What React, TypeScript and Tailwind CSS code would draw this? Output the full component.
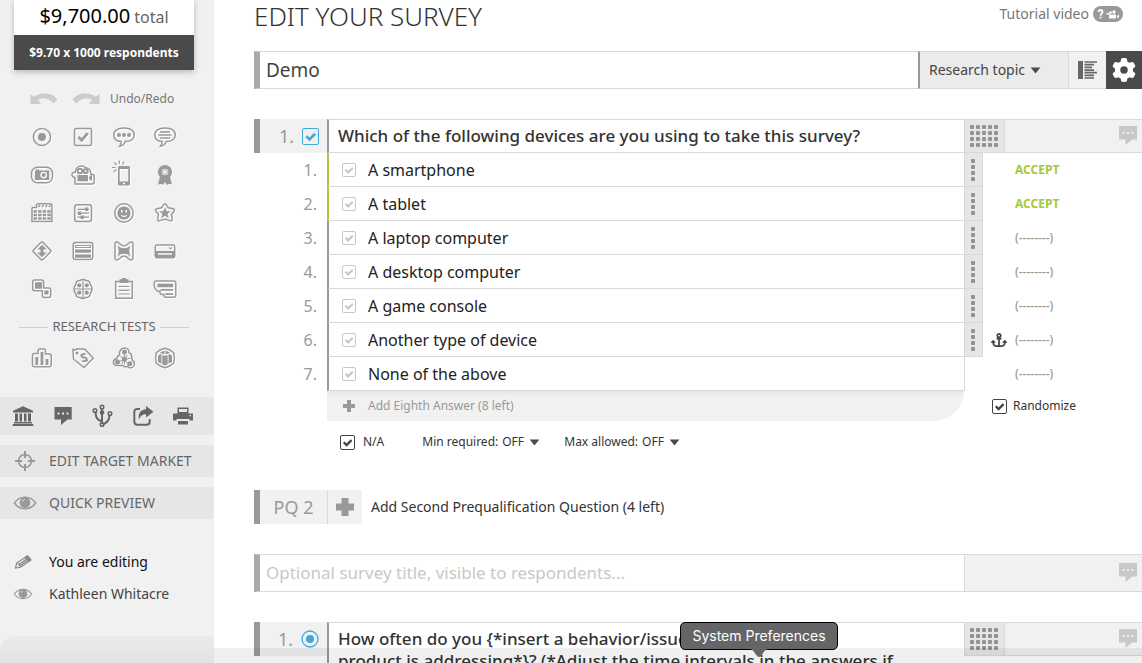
import type { ReactNode } from 'react'
import clsx from 'clsx'
import { FaAnchor, FaGear } from 'react-icons/fa6'

interface Tool {
  label: string
  icon: ReactNode
}

interface Answer {
  text: string
  status: string
  accepted?: boolean
  anchored?: boolean
  fixed?: boolean
}

const ANSWERS: Answer[] = [
  { text: 'A smartphone', status: 'ACCEPT', accepted: true },
  { text: 'A tablet', status: 'ACCEPT', accepted: true },
  { text: 'A laptop computer', status: '(--------)' },
  { text: 'A desktop computer', status: '(--------)' },
  { text: 'A game console', status: '(--------)' },
  { text: 'Another type of device', status: '(--------)', anchored: true },
  { text: 'None of the above', status: '(--------)', fixed: true },
]

const SOLID = { fill: 'currentColor', stroke: 'none' }

const BUBBLE = 'M12 3C5.5 3 1.800 5.500 1.800 10s3.200 6.300 7.400 6.600c0 1.700-.5 3.200-1.600 4.600 3.100-.5 4.900-2.200 5.500-4.600 5.700-.1 9.100-2.300 9.100-6.600S18.500 3 12 3z'

const TOOLS: Tool[] = [
  {
    label: 'Single choice',
    icon: (
      <>
        <circle cx="12" cy="12" r="8.6" />
        <circle cx="12" cy="12" r="4" {...SOLID} />
      </>
    ),
  },
  {
    label: 'Multiple choice',
    icon: (
      <>
        <rect x="3.5" y="3.5" width="17" height="17" rx="1.5" />
        <path d="M7.5 12l3.2 3.2 6-7" strokeWidth="2.8" />
      </>
    ),
  },
  {
    label: 'Open text',
    icon: (
      <>
        <path d={BUBBLE} />
        <g {...SOLID}>
          <circle cx="7" cy="10" r="2" />
          <circle cx="12" cy="10" r="2" />
          <circle cx="17" cy="10" r="2" />
        </g>
      </>
    ),
  },
  {
    label: 'Long text',
    icon: (
      <>
        <path d={BUBBLE} />
        <path d="M7 7h10M5.5 10h13M7 13h10" strokeWidth="1.5" />
      </>
    ),
  },
  {
    label: 'Image',
    icon: (
      <>
        <rect x="1.5" y="4.2" width="21" height="15.6" rx="6" />
        <path {...SOLID} fillRule="evenodd" d="M5 7.5h1v-1h3v1h10.300V17H5zM13.700 8.700a3.400 3.400 0 100 6.800 3.400 3.400 0 000-6.800z" />
        <circle cx="13.7" cy="12.1" r="2" {...SOLID} />
      </>
    ),
  },
  {
    label: 'Video',
    icon: (
      <>
        <path d="M4 21v-6.500C2 14.500.8 13 1 11.300 1.300 9.500 3 9 4.300 9.300 4.500 5 7.500 3 10.500 3c1.700 0 3 .7 4 1.700 3 0 5 2 5 4.500l.3 2.300h1.700c1.200 0 1.700.8 1.700 2v5.500c0 1.300-.5 2-1.700 2z" />
        <circle cx="9" cy="8" r="2.3" strokeWidth="2" />
        <circle cx="14.8" cy="8.2" r="1.9" strokeWidth="2" />
        <path {...SOLID} d="M6.500 12H17v6.200H6.500zM18 14l3-2v6l-3-2z" />
      </>
    ),
  },
  {
    label: 'Mobile',
    icon: (
      <>
        <path {...SOLID} fillRule="evenodd" d="M7.700 3h8.600c1 0 1.700.7 1.700 1.700v16c0 1-.7 1.700-1.700 1.700H7.700c-1 0-1.700-.7-1.700-1.700v-16C6 3.700 6.700 3 7.700 3zM7.700 6v12.500h8.600V6zM11 19.800v1.400h2v-1.400z" />
        <path d="M7.300-2.500V1M12-1.500l-1.500 3M2.500-.5l2.300 2.700M0 4.500h3.500M4.500 6.500L1.500 9" strokeWidth="1.200" />
      </>
    ),
  },
  {
    label: 'Award',
    icon: (
      <>
        <circle cx="12" cy="9" r="5.2" strokeWidth="3.8" />
        <circle cx="12" cy="9" r="2.4" strokeWidth=".8" />
        <path {...SOLID} d="M7 13.500L5 21.500l3.200-.6 2 1 1.800-3 1.800 3 2-1 3.200.6-2-8z" />
      </>
    ),
  },
  {
    label: 'Date grid',
    icon: (
      <>
        <path d="M6.500 6.500v-2c0-1 .8-1.700 1.700-1.700H20c1.200 0 2 .8 2 2v15.700H2V7.300c0-.5.300-.8.800-.8z" />
        <path d="M8.500 6L10 4M12 6l1.500-2M15.500 6L17 4M19 6l1.500-2" />
        <path d="M3.500 10.500h17.300M3.500 14h17.300M3.500 17.500h17.300" strokeWidth="2.4" strokeDasharray="3.500 1.100" />
      </>
    ),
  },
  {
    label: 'Sliders',
    icon: (
      <>
        <rect x="3.7" y="3.7" width="16.8" height="16.8" rx="2.5" />
        <path d="M6.500 8.300H18M6.500 12.200H18M6.500 16.200H18" strokeWidth="1.200" />
        <path {...SOLID} d="M14 6.500h3.200V10H14zM7 10.500h3.200V14H7zM9.700 14.500h3.200V18H9.700z" />
      </>
    ),
  },
  {
    label: 'Rating',
    icon: (
      <>
        <circle cx="12" cy="12" r="9.2" />
        <path {...SOLID} fillRule="evenodd" d="M12 5.400a6.600 6.600 0 100 13.200 6.600 6.600 0 000-13.200zM9 9h1.500v2.500H9zM13.500 9H15v2.500h-1.500zM8.500 13.800c2.300 1.200 4.700 1.200 7 0-.7 1.500-2 2.300-3.500 2.300s-2.800-.8-3.500-2.300z" />
      </>
    ),
  },
  {
    label: 'Star rating',
    icon: (
      <>
        <path d="M12 2.800c1.600 0 2.300 3 3.500 4 1.500.6 5.500.3 6 2 .4 1.600-2.600 3.500-3 4.700 0 1.500 1.600 5 .3 6.200-1.400 1.200-4.400-1.500-6.800-1.500s-5.400 2.700-6.800 1.500c-1.300-1.200.3-4.700.3-6.200-.4-1.200-3.400-3.100-3-4.700.5-1.700 4.500-1.400 6-2 1.200-1 1.900-4 3.500-4z" />
        <path {...SOLID} d="M12 6.300l1.700 4h4.100l-3.300 2.700 1.200 4.300L12 14.700l-3.700 2.600L9.500 13l-3.300-2.700h4.100z" />
      </>
    ),
  },
  {
    label: 'Ranking',
    icon: (
      <>
        <rect x="5.3" y="5.3" width="13.4" height="13.4" rx="1.5" transform="rotate(45 12 12)" />
        <path {...SOLID} d="M12 5.800l4.700 4.700h-3.200v3h3.200L12 18.200l-4.700-4.700h3.200v-3H7.300z" />
      </>
    ),
  },
  {
    label: 'Dropdown list',
    icon: (
      <>
        <rect x="2.2" y="3.5" width="19.6" height="17" rx="2.5" />
        <path d="M4.500 6.500h15v2h-15z" strokeWidth="1.200" />
        <path {...SOLID} d="M4 10.500h16v3.300H4zM4 15.500h16v3.300H4z" />
      </>
    ),
  },
  {
    label: 'Semantic scale',
    icon: (
      <>
        <path d="M5 3c2.500 0 3.500 4 7 4s4.500-4 7-4c1.300 0 2 .8 2 2v14c0 1.200-.7 2-2 2-2.500 0-3.500-4-7-4s-4.500 4-7 4c-1.300 0-2-.8-2-2V5c0-1.200.7-2 2-2z" />
        <path {...SOLID} d="M5.500 6c1.500 2 3.500 3.300 6.500 3.300S17 8 18.500 6c-1.600 4-1.600 8 0 12-1.500-2-3.500-3.300-6.500-3.300S7 16 5.500 18c1.600-4 1.600-8 0-12z" />
      </>
    ),
  },
  {
    label: 'Card',
    icon: (
      <>
        <rect x="2.3" y="6" width="19.4" height="12.7" rx="1.7" />
        <path {...SOLID} fillRule="evenodd" d="M2 12h20v6.500H2zM5 14.300v1.500h14v-1.500z" />
        <path {...SOLID} d="M15.500 8.500h4l-2 2.300z" />
      </>
    ),
  },
  {
    label: 'Blocks',
    icon: (
      <>
        <path d="M4.700 3h7c1.200 0 2 .8 2 2v6h5c1.200 0 2 .8 2 2v5.500c0 1.200-.8 2-2 2h-4.400c-1.200 0-2-.8-2-2v-4.700H4.700c-1.200 0-2-.8-2-2V5c0-1.200.8-2 2-2z" />
        <path {...SOLID} d="M5 5.300h7.200v6.500H5zM14.300 13.500h4.200v4h-4.200z" />
      </>
    ),
  },
  {
    label: 'Quadrants',
    icon: (
      <>
        <path d="M9 3.500c2-1.200 4-1.200 6 0 2.300 0 4 1.500 4.200 3.800 2.400 2.700 2.400 6.700 0 9.400-.2 2.300-1.900 3.800-4.200 3.800-2 1.200-4 1.200-6 0-2.300 0-4-1.500-4.200-3.800-2.400-2.700-2.400-6.700 0-9.400C5 5 6.700 3.500 9 3.500z" />
        <path d="M12 3.500v17M3.500 12h17" strokeWidth="1.200" />
        <g {...SOLID}>
          <circle cx="8.3" cy="8.3" r="2.1" />
          <circle cx="15.7" cy="8.3" r="2.1" />
          <circle cx="8.3" cy="15.7" r="2.1" />
          <circle cx="15.7" cy="15.7" r="2.1" />
        </g>
      </>
    ),
  },
  {
    label: 'Form',
    icon: (
      <>
        <path d="M3.700 4.500h16.600v16.800H3.700z" />
        <path {...SOLID} d="M7.500 2.300h2.300l.7-1.300h3l.7 1.300h2.300V6h-9z" />
        <path d="M6.500 9.500h11M6.500 13.300h11M6.500 17h11" strokeWidth="1.200" />
      </>
    ),
  },
  {
    label: 'Funnel',
    icon: (
      <>
        <path d="M3.500 4h17.300c1.200 0 2 .8 2 2v12.300c0 1.200-.8 2-2 2H13c-1.200 0-2-.8-2-2v-.8H9c-1.200 0-2-.8-2-2v-1.200H5C3 13 1.300 11 1.300 8.500V6c0-1.200.8-2 2.200-2z" />
        <path {...SOLID} d="M4.500 6.700h15.600v3.600H4.500zM7.500 12h12.600v1.700H7.500zM12.500 16.200h7.600v1.700h-7.600z" />
      </>
    ),
  },
]

const RESEARCH_TOOLS: Tool[] = [
  {
    label: 'Concept test',
    icon: (
      <>
        <path d="M4.500 7.500H8V5c0-1.200.8-2 2-2h3.500c1.200 0 2 .8 2 2v3h3.300c1.500 0 2.500 1 2.500 2.500v8.200c0 1.200-.8 2-2 2H4.500c-1.200 0-2-.8-2-2V9.500c0-1.200.8-2 2-2z" />
        <path d="M6.800 11v8M12 6v13M17 13v6" strokeWidth="2.800" />
      </>
    ),
  },
  {
    label: 'Price test',
    icon: (
      <>
        <path d="M2 3.500c1.500.8 3 .5 4-.8l8 .6 8.300 9L13 21.500 2.500 13z" />
        <path d="M14.500 8.500c-2-1.300-4.500.3-3.500 2.200 1 1.500 3.700.2 4.600 2 .8 2-2 3.300-4.200 1.800M9.500 9l1.200 1M16.500 15.300l-1-1" strokeWidth="2" />
        <circle cx="6" cy="7" r=".8" />
      </>
    ),
  },
  {
    label: 'Network test',
    icon: (
      <>
        <path d="M12.500 2c3.200 0 4.700 2 4.500 4.500 2 .8 3 2.500 2.700 5l.5 2.500c2.300 1.500 2.600 4 1.600 6-1.300 2.300-4.800 2.500-6.500.3-1.500.8-3.300.7-4.800-.8H5C2.500 19.500 1 17.500 1.500 15.300 2 13.500 3.300 12.700 5 12.700c0-1.700 1-3 2.500-3.700C7 5 9 2 12.500 2z" />
        <path d="M12.500 6v13M5.500 16l13-4M8 9.500l9 9M9.500 18l6-9" strokeWidth="1" />
        <g {...SOLID}>
          <circle cx="12.5" cy="6" r="2.5" />
          <circle cx="5.500" cy="16" r="2.5" />
          <circle cx="17.800" cy="17.800" r="2.5" />
          <circle cx="12.500" cy="13" r="2.600" />
        </g>
      </>
    ),
  },
  {
    label: 'Package test',
    icon: (
      <>
        <path d="M12 2.300c3.200.8 6.300 2.200 8.700 4.500 1 3.500 1 7 0 10.500-2.400 2.300-5.500 3.700-8.700 4.400-3.200-.7-6.300-2.100-8.700-4.400-1-3.500-1-7 0-10.500C5.700 4.500 8.800 3.100 12 2.300z" />
        <path {...SOLID} d="M5 9.500l3.500-1.700v10L5 16zM9.300 9.500h5.400v9L12 19.500l-2.700-1zM15.500 7.800L19 9.500V16l-3.500 1.800zM7 6.500l4.500-2v3.500h-2zM17 6.500l-4.500-2v3.500h2z" />
      </>
    ),
  },
]

const ACTIONS: Tool[] = [
  {
    label: 'Library',
    icon: (
      <path {...SOLID} d="M12 2.300l10 4.500v1.700H2V6.800zM4 9.500h3v8H4zM8.500 9.500H11v8H8.500zM13 9.500h2.500v8H13zM17 9.500h3v8h-3zM3 18h18v1.500H3zM1.700 20h20.600v2H1.700z" />
    ),
  },
  {
    label: 'Comments',
    icon: (
      <path {...SOLID} fillRule="evenodd" d="M3.500 3h17.200v12.500h-4.200L10 21v-5.500H3.500zM6.500 8.500v2h2v-2zM11 8.500v2h2v-2zM15.500 8.500v2h2v-2z" />
    ),
  },
  {
    label: 'Branching',
    icon: (
      <>
        <path d="M11 4v16M4.500 8c0 6 2 8 6.500 9.500M18.500 11c0 5-2.500 8-7 9.500" strokeWidth="2" />
        <circle cx="11" cy="3" r="1.8" />
        <circle cx="11" cy="8.5" r="1.6" />
        <circle cx="4" cy="6.5" r="1.8" />
        <circle cx="19" cy="9.5" r="1.8" />
        <circle cx="11" cy="20.5" r="1.8" />
      </>
    ),
  },
  {
    label: 'Share',
    icon: (
      <>
        <path d="M9 5H6.500C4.500 5 3.300 6.200 3.300 8v9.500c0 2 1.200 3.200 3.200 3.200h9c2 0 3.200-1.200 3.200-3.200V15" strokeWidth="2" />
        <path {...SOLID} d="M15 2l7.500 5.800L15 13.500v-3.300c-3.500 0-5.500 1.500-7 5.300-1.200-6 1.500-10 7-10.300z" />
      </>
    ),
  },
  {
    label: 'Print',
    icon: (
      <path {...SOLID} fillRule="evenodd" d="M6.500 3.500h11v6h-11zM8 5v3h8V5zM2 9.500h20v7h-3.500V15h-13v1.500H2zM7 17h10v3.500H7zM18.500 11v1.300H20V11z" />
    ),
  },
]

function Icon({ children, className }: { children: ReactNode; className?: string }) {
  return (
    <svg
      viewBox="0 0 24 24"
      className={clsx('size-6 overflow-visible', className)}
      fill="none"
      stroke="currentColor"
      strokeWidth={1.5}
      aria-hidden="true"
    >
      {children}
    </svg>
  )
}

function ToolGrid({ tools }: { tools: Tool[] }) {
  return (
    <div className="grid grid-cols-4 pr-[29px] pl-[21px] text-[#999]">
      {tools.map(({ label, icon }) => (
        <button key={label} aria-label={label} className="flex h-[38px] items-center justify-center">
          <Icon className="drop-shadow-[1px_1px_0_#fff]">{icon}</Icon>
        </button>
      ))}
    </div>
  )
}

function Eye({ className }: { className: string }) {
  return (
    <svg viewBox="0 0 26 16" className={className} fill="none" stroke="currentColor" strokeWidth="1.5" aria-hidden="true">
      <path d="M1.500 8C7-.3 19-.3 24.500 8 19 16.300 7 16.300 1.500 8z" />
      <circle cx="13" cy="7.5" r="5.8" {...SOLID} />
      <path d="M10.500 6.500c.2-1.400 1-2.200 2.300-2.400" stroke="#f1f1f1" strokeWidth="1" />
    </svg>
  )
}

function Check({ label, className, id }: { label?: string; className: string; id?: string }) {
  return (
    <span className={clsx('inline-grid shrink-0', className)}>
      <input
        id={id}
        type="checkbox"
        defaultChecked
        aria-label={label}
        className="peer col-start-1 row-start-1 size-full appearance-none rounded-xs border border-current"
      />
      <svg
        viewBox="0 0 16 16"
        className="pointer-events-none invisible col-start-1 row-start-1 size-full peer-checked:visible"
        fill="none"
        stroke="currentColor"
        strokeWidth="2.5"
      >
        <path d="M4 7.700l3 3 5.300-5.300" />
      </svg>
    </span>
  )
}

function Caret() {
  return (
    <svg viewBox="0 0 12 8" className="pointer-events-none col-start-1 row-start-1 h-[7px] w-[11px] justify-self-end" aria-hidden="true">
      <path d="M.5.5h11L6 7.500z" fill="#4a4a4a" />
    </svg>
  )
}

function LimitSelect({ id, label }: { id: string; label: string }) {
  return (
    <div className="flex items-center gap-1 text-xs text-[#333]">
      <label htmlFor={id}>{label}</label>
      <span className="grid w-[38px] items-center">
        <select id={id} className="col-start-1 row-start-1 w-[38px] appearance-none bg-transparent">
          <option>OFF</option>
          <option>1</option>
          <option>2</option>
        </select>
        <Caret />
      </span>
    </div>
  )
}

function Dots({ columns }: { columns: number }) {
  const width = columns * 6 - 2
  return (
    <svg width={width} height="22" className="fill-[#929292]" aria-hidden="true">
      {Array.from({ length: columns * 4 }, (_, i) => (
        <rect key={i} x={(i % columns) * 6} y={Math.floor(i / columns) * 6} width="4" height="4" rx="1" />
      ))}
    </svg>
  )
}

function NoteButton() {
  return (
    <button aria-label="Comment" className="ml-auto flex items-center pr-1 pb-0.5 text-[#c8c8c8]">
      <svg viewBox="0 0 20 20" className="size-5" fill="currentColor" aria-hidden="true">
        <path fillRule="evenodd" d="M1 1h18v13.500h-5L7.500 20v-5.500H1zM4.500 7v2h2V7zM9 7v2h2V7zM13.500 7v2h2V7z" />
      </svg>
    </button>
  )
}

function QuestionHeader({ type, text, rows }: { type: ReactNode; text: string; rows: number }) {
  return (
    <div className="grid grid-cols-[73px_1fr_178px] items-start">
      <div className="flex h-[34px] items-center justify-end gap-2 border-l-6 border-[#999] bg-[#f1f1f1] pr-2 text-lg text-[#999]">
        1.
        <button aria-label="Question type" className="flex text-[#3ea9de]">
          {type}
        </button>
      </div>
      <textarea
        aria-label="Question text"
        rows={rows}
        defaultValue={text}
        className="block w-full resize-none overflow-hidden border-y border-l-2 border-y-[#d9d9d9] border-l-[#999] bg-white px-[9px] py-[5px] text-[17px] leading-[22px] font-medium text-[#333]"
      />
      <div className="flex h-[34px] border-y border-l border-[#d9d9d9] bg-[#f1f1f1]">
        <button aria-label="Move question" className="flex w-10 items-center justify-center border-r border-[#d9d9d9] bg-[#e6e6e6] pr-px">
          <Dots columns={5} />
        </button>
        <NoteButton />
      </div>
    </div>
  )
}

function AnswerRow({ answer, index }: { answer: Answer; index: number }) {
  return (
    <li className="grid h-[34px] grid-cols-[73px_1fr_178px]">
      <span className="self-center pr-2.5 text-right text-base text-[#999]">{index + 1}.</span>
      <div
        className={clsx(
          'flex items-center gap-3 border-b border-l-2 border-b-[#d9d9d9] pl-[13px]',
          answer.accepted ? 'border-l-[#a4c93a]' : 'border-l-[#999]',
        )}
      >
        <Check label={`Select ${answer.text}`} className="size-[14px] text-[#c8c8c8]" />
        <input
          aria-label={`Answer ${index + 1}`}
          defaultValue={answer.text}
          className="min-w-0 flex-1 bg-transparent text-base text-[#222]"
        />
      </div>
      <div className="flex items-center border-l border-[#d9d9d9]">
        {answer.fixed ? (
          <span className="w-[18px]" />
        ) : (
          <button aria-label="Move answer" className="flex w-[18px] items-center justify-center self-stretch border-r border-b border-[#d9d9d9] bg-[#e6e6e6] pr-px">
            <Dots columns={1} />
          </button>
        )}
        <span className="flex w-8 justify-center text-[#444]">{answer.anchored && <FaAnchor className="size-4" />}</span>
        <button className={clsx('text-xs', answer.accepted ? 'font-bold text-[#a4c93a]' : 'font-medium text-[#999]')}>
          {answer.status}
        </button>
      </div>
    </li>
  )
}

function Sidebar() {
  return (
    <aside className="flex w-[214px] shrink-0 flex-col bg-[#f1f1f1] text-[#666]">
      <div className="ml-3.5 w-[180px] shadow-[0_2px_6px_rgba(0,0,0,0.25)]">
        <div className="flex h-[35px] items-baseline justify-center gap-1 bg-white pt-0.5 text-base">
          <span className="text-xl text-black">$9,700.00</span>
          total
        </div>
        <div className="flex h-[35px] items-center justify-center bg-[#4a4a4a] text-xs font-bold text-white">
          $9.70 x 1000 respondents
        </div>
      </div>

      <div className="mt-[17px] flex h-6 items-center pl-[30px] text-xs text-[#777]">
        <button aria-label="Undo" className="mr-3.5 text-[#ccc]">
          <svg viewBox="0 0 28 12" className="h-3 w-7" fill="currentColor">
            <path d="M.5 1L4 3.500C11-1 22-1 27.500 6.500l-3.800 4C19.500 5 12.500 4.500 8 7l3 4H.5z" />
          </svg>
        </button>
        <button aria-label="Redo" className="mr-2.5 text-[#ccc]">
          <svg viewBox="0 0 28 12" className="h-3 w-7" fill="currentColor">
            <path d="M27.500 1L24 3.500C17-1 6-1 .5 6.500l3.800 4C8.500 5 15.500 4.500 20 7l-3 4h10.500z" />
          </svg>
        </button>
        Undo/Redo
      </div>

      <div className="mt-[7px]">
        <ToolGrid tools={TOOLS} />
      </div>

      <h2 className="mx-[19px] mt-[9px] mb-0.5 flex h-5 items-center gap-1 text-[13px] whitespace-nowrap before:h-px before:flex-1 before:bg-[#d0d0d0] after:mr-1.5 after:h-px after:flex-1 after:bg-[#d0d0d0]">
        RESEARCH TESTS
      </h2>
      <ToolGrid tools={RESEARCH_TOOLS} />

      <div className="mt-5 flex h-[38px] items-center bg-[#e6e6e6] pl-[3px]">
        {ACTIONS.map(({ label, icon }) => (
          <button key={label} aria-label={label} className="flex w-10 justify-center text-[#666]">
            <Icon>{icon}</Icon>
          </button>
        ))}
      </div>
      <a href="#target" className="mt-2.5 flex h-8 items-center bg-[#e6e6e6] text-sm">
        <span className="flex w-[49px] justify-center text-[#999]">
          <svg viewBox="0 0 20 20" className="size-5" fill="none" stroke="currentColor" strokeWidth="1.5">
            <circle cx="10" cy="10" r="6.5" />
            <path d="M10 0v7M10 13v7M0 10h7M13 10h7" strokeWidth="2" />
          </svg>
        </span>
        EDIT TARGET MARKET
      </a>
      <a href="#preview" className="mt-2.5 flex h-8 items-center bg-[#e6e6e6] text-sm">
        <span className="flex w-[49px] justify-center text-[#999]">
          <Eye className="h-4 w-6" />
        </span>
        QUICK PREVIEW
      </a>

      <ul className="mt-[27px] text-sm">
        <li className="flex h-8 items-center text-[#111]">
          <span className="flex w-[49px] justify-center pr-1 text-[#888]">
            <svg viewBox="0 0 18 14" className="h-[14px] w-[18px]" fill="none" stroke="currentColor" strokeWidth="1.2">
              <path d="M1.500 13l1.200-5L11 2.500l3.500 4.200-8 5.600z" />
              <path d="M4 8.500l2.500 3M5 9.500l7-5M6.500 10.500l6.500-4.700" />
              <path d="M11.500 2l2-1.200 3.500 4-2 1.500z" fill="currentColor" />
            </svg>
          </span>
          You are editing
        </li>
        <li className="flex h-8 items-center text-[#444]">
          <span className="flex w-[49px] justify-center pr-1 text-[#999]">
            <Eye className="h-3 w-5" />
          </span>
          Kathleen Whitacre
        </li>
      </ul>

      <div className="mt-auto h-[27px] rounded-tl-2xl bg-linear-to-b from-[#ebebeb] to-[#e2e2e2]" />
    </aside>
  )
}

export default function App() {
  return (
    <div className="relative flex h-screen overflow-hidden bg-white font-['Noto_Sans','Open_Sans',sans-serif] text-[#333]">
      <Sidebar />

      <main className="min-w-0 flex-1 pl-10">
        <header className="flex h-[51px] items-start justify-between pr-[19px]">
          <h1 className="text-[26px] leading-8 font-light">EDIT YOUR SURVEY</h1>
          <a href="#tutorial" className="flex items-center gap-1 pt-1 text-sm leading-5 text-[#777]">
            Tutorial video
            <svg viewBox="0 0 30 16" className="h-4 w-[30px]" aria-hidden="true">
              <rect width="30" height="16" rx="8" fill="#999" />
              <path d="M5.500 6c0-2.700 4-2.700 4 0 0 1.500-1.900 1.500-1.900 3.700M7.600 10.800v1.800" fill="none" stroke="#fff" strokeWidth="1.8" />
              <path d="M16 8.500h7v4h-7zM24 10l2-1.500v4L24 11zM13.500 7h3v1.500h-3z" fill="#fff" />
              <circle cx="17.5" cy="6.5" r="1.3" fill="#fff" />
              <circle cx="21" cy="6" r="1.7" fill="#fff" />
            </svg>
          </a>
        </header>

        <div className="flex h-[38px]">
          <input
            aria-label="Survey name"
            defaultValue="Demo"
            className="min-w-0 flex-1 border-y border-l-6 border-y-[#d9d9d9] border-l-[#aaa] px-1.5 text-[19px] text-[#444]"
          />
          <div className="grid w-[150px] items-center border-y border-l-2 border-y-[#d9d9d9] border-l-[#999] bg-[#ebebeb]">
            <select
              aria-label="Research topic"
              className="col-start-1 row-start-1 h-full appearance-none bg-transparent pl-[9px] text-sm text-[#444]"
            >
              <option>Research topic</option>
              <option>Consumer</option>
              <option>Media</option>
            </select>
            <span className="pointer-events-none col-start-1 row-start-1 mr-[27px] grid">
              <Caret />
            </span>
          </div>
          <button aria-label="Outline" className="flex w-[38px] items-center justify-center border-y border-l border-[#d9d9d9] bg-[#f1f1f1] pr-px text-[#666]">
            <svg viewBox="0 0 20 20" className="size-5">
              <path fill="currentColor" d="M1 1h5v18H1z" />
              <path stroke="currentColor" strokeWidth="1.7" d="M7.500 2h12.500M7.500 4.700H17M7.500 7.400H15M7.500 10.100H17M7.500 12.600h12.500M7.500 15.300H17M7.500 18h9.500" />
            </svg>
          </button>
          <button aria-label="Settings" className="flex w-9 items-center justify-center bg-[#4a4a4a] text-white">
            <FaGear className="size-6" />
          </button>
        </div>

        <section className="mt-[30px]">
          <QuestionHeader
            type={<Check label="Multiple choice type" className="size-[17px]" />}
            text="Which of the following devices are you using to take this survey?"
            rows={1}
          />
          <ol>
            {ANSWERS.map((answer, i) => (
              <AnswerRow key={answer.text} answer={answer} index={i} />
            ))}
          </ol>
          <div className="grid h-[30px] grid-cols-[73px_1fr_178px] text-xs">
            <button className="col-start-2 flex items-center gap-3 rounded-br-[30px] bg-[#f1f1f1] bg-linear-to-b from-[#e6e6e6] to-[#f1f1f1] to-20% pl-[15px] text-[#999]">
              <svg viewBox="0 0 14 14" className="size-[14px]" aria-hidden="true">
                <path d="M7 1v12M1 7h12" stroke="currentColor" strokeWidth="4" />
              </svg>
              Add Eighth Answer (8 left)
            </button>
            <div className="flex items-center gap-1.5 pl-7">
              <Check id="randomize" className="size-[15px] text-[#444]" />
              <label htmlFor="randomize">Randomize</label>
            </div>
          </div>
          <div className="mt-[11px] flex h-5 items-center pl-[86px]">
            <Check id="na" className="size-[15px] text-[#444]" />
            <label htmlFor="na" className="mr-[38px] ml-2 text-xs">N/A</label>
            <LimitSelect id="min-required" label="Min required:" />
            <span className="w-6" />
            <LimitSelect id="max-allowed" label="Max allowed:" />
          </div>
        </section>

        <button className="mt-[38px] flex h-[34px] items-center text-sm">
          <span className="flex h-full w-[73px] items-center justify-center border-l-6 border-[#999] bg-[#f1f1f1] text-lg text-[#999]">
            PQ 2
          </span>
          <span className="mr-[9px] flex h-full w-[35px] items-center justify-center border-l border-[#d9d9d9] bg-[#f1f1f1] text-[#999]">
            <svg viewBox="0 0 20 20" className="size-5" aria-hidden="true">
              <path d="M10 1v18M1 10h18" stroke="currentColor" strokeWidth="7" />
            </svg>
          </span>
          Add Second Prequalification Question (4 left)
        </button>

        <div className="mt-[30px] flex h-[38px]">
          <input
            aria-label="Survey title"
            placeholder="Optional survey title, visible to respondents..."
            className="min-w-0 flex-1 border-y border-l-6 border-y-[#d9d9d9] border-l-[#aaa] px-1.5 text-[17px] placeholder:text-[#c8c8c8]"
          />
          <div className="flex w-[178px] border-y border-l border-[#d9d9d9] bg-[#f1f1f1]">
            <NoteButton />
          </div>
        </div>

        <section className="mt-[30px]">
          <QuestionHeader
            type={
              <svg viewBox="0 0 18 18" className="size-[18px]" aria-hidden="true">
                <circle cx="9" cy="9" r="8" fill="none" stroke="currentColor" strokeWidth="1.3" />
                <circle cx="9" cy="9" r="4" fill="currentColor" />
              </svg>
            }
            text={'How often do you {*insert a behavior/issue/activity that my\nproduct is addressing*}? (*Adjust the time intervals in the answers if\nnecessary*)'}
            rows={3}
          />
        </section>
      </main>

      {/* dock edge along the bottom of the window */}
      <div className="pointer-events-none absolute right-0 bottom-0 left-[214px] h-[15px] bg-black/6" />
      <div role="tooltip" className="absolute bottom-[13px] left-[680px] flex h-7 w-[158px] items-center justify-center rounded-[5px] border border-black bg-[#656466] font-['Inter',sans-serif] text-sm text-white">
        System Preferences
        <svg viewBox="0 0 18 8" className="absolute top-full left-[69px] h-2 w-[18px]" aria-hidden="true">
          <path d="M0 0h18c-4 0-6 8-9 8S4 0 0 0z" fill="#656466" />
        </svg>
      </div>
    </div>
  )
}
